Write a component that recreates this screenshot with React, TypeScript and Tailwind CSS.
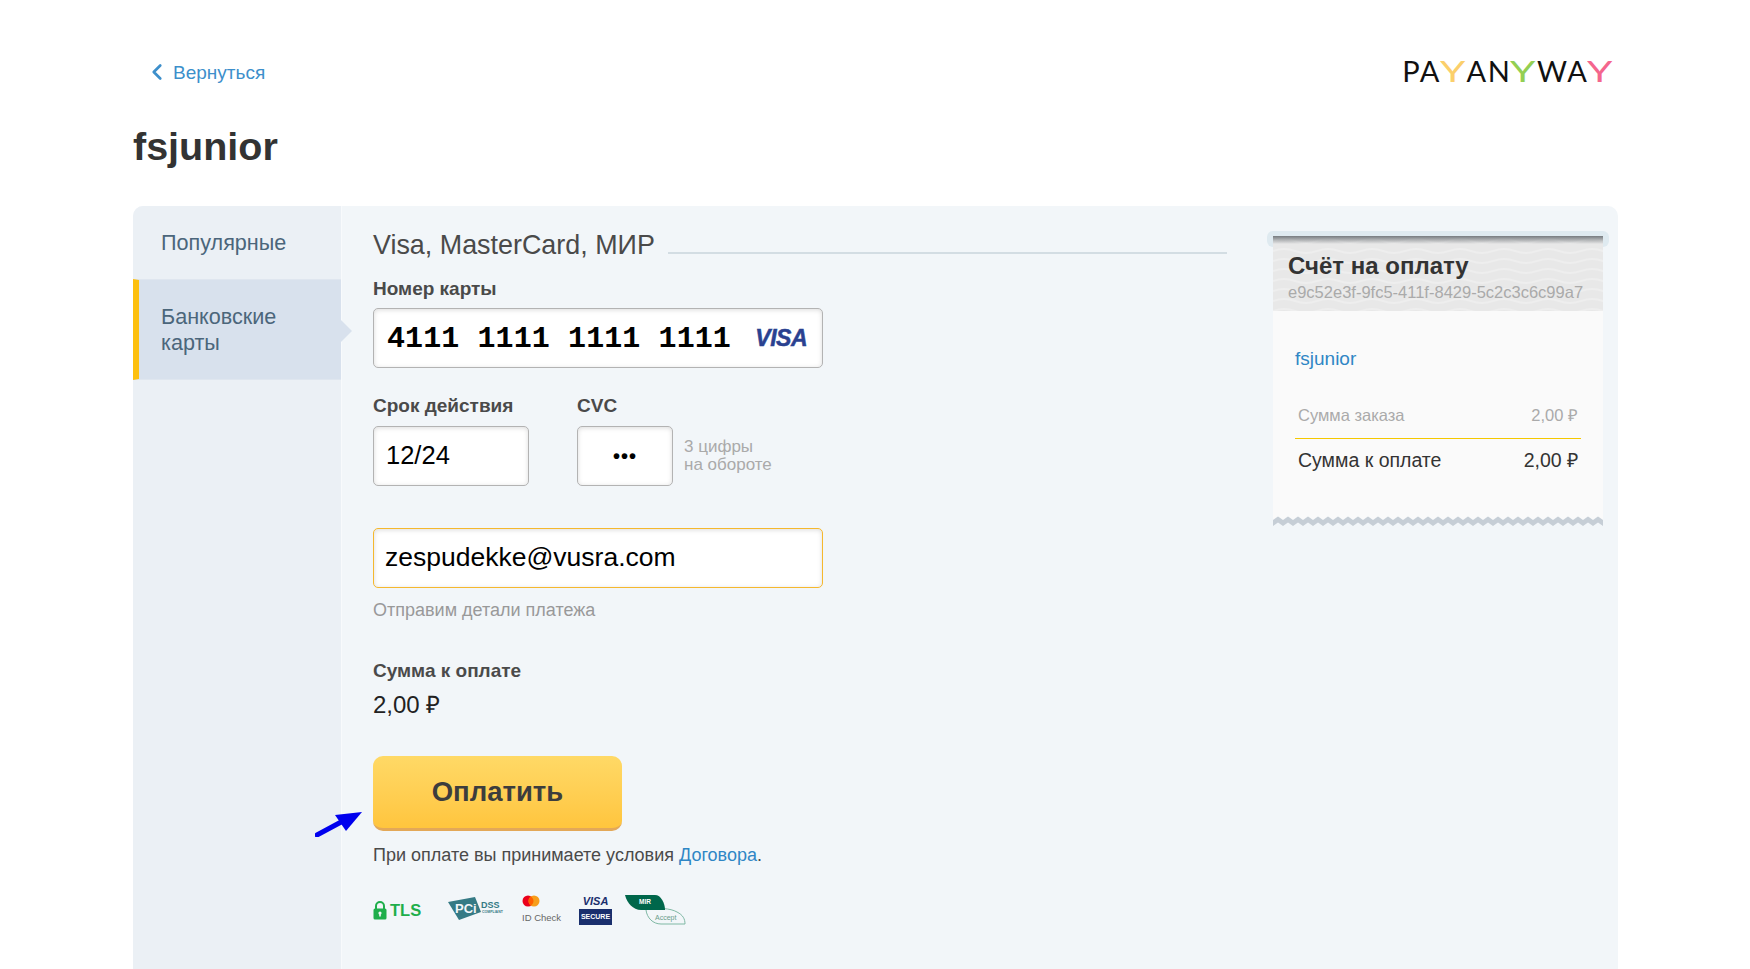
import { ChevronLeft } from "lucide-react";

const sans = "font-['Liberation_Sans',Arial,sans-serif]";

function Logo() {
  return (
    <div className="font-['Lato',sans-serif] font-normal text-[29px] leading-none text-[#111] tracking-[1.5px] flex">
      <span>PA</span>
      <span className="inline-block scale-x-[1.4] mx-[3px] text-[#fbcf6b]">Y</span>
      <span>AN</span>
      <span className="inline-block scale-x-[1.4] mx-[3px] text-[#93cf53]">Y</span>
      <span>WA</span>
      <span className="inline-block scale-x-[1.4] ml-[3px] text-[#f4668d]">Y</span>
    </div>
  );
}

function Field({ className, children }: { className: string; children: React.ReactNode }) {
  return (
    <div className={"h-[60px] bg-white rounded-[5px] border flex items-center shadow-[inset_0_1px_5px_rgba(0,0,0,0.14)] " + className}>
      {children}
    </div>
  );
}

function Label({ children }: { children: React.ReactNode }) {
  return <div className="text-[19px] leading-[22px] font-bold text-[#4a4a4a]">{children}</div>;
}

function WaveHeader() {
  return (
    <svg className="absolute inset-0 w-full h-full" aria-hidden="true">
      <defs>
        <pattern id="wave" width="44" height="10" patternUnits="userSpaceOnUse">
          <path d="M0 5 Q11 1 22 5 T44 5" fill="none" stroke="#ffffff" strokeOpacity="0.25" strokeWidth="2" />
        </pattern>
      </defs>
      <rect width="100%" height="100%" fill="url(#wave)" />
    </svg>
  );
}

function Zigzag() {
  return (
    <svg className="block w-full h-[12px] bg-[#f2f6f9]" aria-hidden="true">
      <defs>
        <pattern id="zig" width="10" height="12" patternUnits="userSpaceOnUse">
          <path d="M0 0 H10 V5 L5 1.5 L0 5 Z" fill="#fafafa" />
          <path d="M0 5 L5 1.5 L10 5 V11 L5 7.5 L0 11 Z" fill="#c6ced6" />
        </pattern>
      </defs>
      <rect width="100%" height="100%" fill="url(#zig)" />
    </svg>
  );
}

function Receipt() {
  return (
    <div className="w-[342px] mt-[25px] shrink-0">
      <div className="h-[16px] rounded-[6px] bg-[#dfeaf0]" />
      <div className="mx-[6px] -mt-[11px] relative">
        <div className="relative h-[75px] bg-[#e8e8e8] pl-[15px] overflow-hidden">
          <WaveHeader />
          <div className="absolute inset-x-0 top-0 h-[8px] bg-gradient-to-b from-[#777c80] to-transparent" />
          <div className="relative pt-[16px] text-[24px] leading-[28px] font-bold text-[#333] whitespace-nowrap">Счёт на оплату</div>
          <div className="relative mt-[2px] text-[16.5px] leading-[20px] text-[#aaa] whitespace-nowrap">e9c52e3f-9fc5-411f-8429-5c2c3c6c99a7</div>
        </div>
        <div className="bg-[#fafafa] h-[204px] px-[22px] pt-[37px]">
          <div className="text-[19px] leading-[22px] text-[#2f86c5]">fsjunior</div>
          <div className="mt-[34px] flex justify-between px-[3px] text-[16.5px] leading-[22px] text-[#aaa]">
            <span>Сумма заказа</span>
            <span>2,00 ₽</span>
          </div>
          <div className="mt-[12px] h-px bg-[#f5c800]" />
          <div className="mt-[9px] flex justify-between px-[3px] text-[19.5px] leading-[24px] text-[#333]">
            <span>Сумма к оплате</span>
            <span>2,00 ₽</span>
          </div>
        </div>
        <Zigzag />
      </div>
    </div>
  );
}

function Marks() {
  return (
    <div className="mt-[29px] flex items-start h-[48px]">
      <div className="w-[75px] mt-[6px] flex items-center gap-[3px] text-[#1fae4b] font-bold text-[16.5px] leading-none">
        <svg width="14" height="19" viewBox="0 0 14 19" aria-hidden="true">
          <path d="M3 8V5a4 4 0 0 1 8 0v3" fill="none" stroke="#1fae4b" strokeWidth="2" />
          <rect x="0.5" y="7.5" width="13" height="11" rx="1.5" fill="#1fae4b" />
          <circle cx="7" cy="12" r="1.6" fill="#f2f6f9" />
          <rect x="6.2" y="12" width="1.6" height="3.5" fill="#f2f6f9" />
        </svg>
        <span>TLS</span>
      </div>
      <div className="w-[74px] mt-[2px] relative h-[26px]">
        <svg width="34" height="24" viewBox="0 0 34 24" className="absolute left-0 top-0" aria-hidden="true">
          <path d="M0 5 L27 0 L33 15 L11 23 Z" fill="#357a85" />
        </svg>
        <span className="absolute left-[7px] top-[5px] text-[13px] leading-none font-bold text-[#f2f6f9]">PCi</span>
        <span className="absolute left-[33px] top-[4px] text-[9px] leading-none font-bold text-[#357a85]">DSS</span>
        <span className="absolute left-[34px] top-[14px] text-[3.5px] leading-none font-bold text-[#357a85]">COMPLIANT</span>
      </div>
      <div className="w-[57px]">
        <svg width="18" height="12" viewBox="0 0 18 12" aria-hidden="true" className="block">
          <circle cx="6" cy="6" r="5.5" fill="#eb001b" />
          <circle cx="12" cy="6" r="5.5" fill="#f79e1b" />
          <path d="M9 1.4a5.5 5.5 0 0 1 0 9.2a5.5 5.5 0 0 1 0-9.2z" fill="#ff5f00" />
        </svg>
        <div className="mt-[5px] text-[9.5px] leading-[11px] text-[#666] whitespace-nowrap">ID Check</div>
      </div>
      <div className="w-[33px] mr-[13px] flex flex-col items-center">
        <div className="italic font-bold text-[11px] leading-[13px] text-[#1a2f6d]">VISA</div>
        <div className="mt-[1px] w-[33px] h-[16px] bg-[#1a2f6d] text-white text-[7px] font-bold leading-[16px] text-center">SECURE</div>
      </div>
      <div className="relative w-[62px] h-[30px]">
        <svg width="62" height="30" viewBox="0 0 62 30" className="absolute inset-0" aria-hidden="true">
          <path d="M22 14 C34 13 45 13 52 17 C58 20 60 24 60 29 H36 C28 29 22 23 21 15 Z" fill="none" stroke="#7fb8a4" />
          <path d="M0 0 H30 C36 0 40 8 40 15 H16 C8 15 2 8 0 0 Z" fill="#00674b" />
        </svg>
        <span className="absolute left-[14px] top-[4px] text-[6.5px] leading-none font-bold text-white">MIR</span>
        <span className="absolute left-[30px] top-[19px] text-[7px] leading-none text-[#6b9d8c]">Accept</span>
      </div>
    </div>
  );
}

export default function App() {
  return (
    <div className={sans + " h-screen overflow-hidden bg-white pl-[133px] pr-[132px]"}>
      <div className="pt-[60px] h-[123px] flex justify-between items-start">
        <a className="flex items-center text-[19px] leading-[24px] text-[#3d8fcb] pl-[12px] mt-px">
          <ChevronLeft size={26} strokeWidth={2.5} className="-ml-[1px] mr-[3px] -mt-[2px]" />
          Вернуться
        </a>
        <div className="pr-[7px] -mt-[4px]">
          <Logo />
        </div>
      </div>
      <h1 className="text-[39.5px] leading-[46px] font-bold text-[#333]">fsjunior</h1>

      <div className="mt-[37px] flex rounded-t-[10px] overflow-hidden bg-[#f2f6f9] h-[763px]">
        <nav className="w-[209px] shrink-0 bg-[#ebf0f5] border-r border-[#f8fafc] text-[21.6px] leading-[26px] text-[#4b667b]">
          <div className="h-[73px] pl-[28px] pt-[24px]">Популярные</div>
          <div className="relative h-[101px] pl-[22px] pt-[24px] bg-[#d8e1ed] border-l-[6px] border-l-[#fdc00f] border-y border-y-[#dfe6ef]">
            Банковские
            <br />
            карты
            <div className="absolute -right-[11px] top-[40px] w-0 h-0 border-y-[11px] border-y-transparent border-l-[11px] border-l-[#d8e1ed]" />
          </div>
        </nav>

        <main className="flex-1 pl-[31px] pr-[9px] flex gap-[40px]">
          <div className="w-[854px]">
            <div className="pt-[24px] flex items-end">
              <div className="text-[26.9px] leading-[30px] text-[#4a4a4a] whitespace-nowrap">Visa, MasterCard, МИР</div>
              <div className="flex-1 ml-[13px] mb-[6px] h-0.5 bg-[#d3dde3]" />
            </div>
            <div className="mt-[18px]"><Label>Номер карты</Label></div>
            <Field className="mt-[8px] w-[450px] border-[#b3b3b3] pl-[13px] pr-[15px] justify-between">
              <span className="pt-[2px] font-['Liberation_Mono',monospace] font-bold text-[30px] tracking-[0.1px] text-black whitespace-nowrap">4111 1111 1111 1111</span>
              <span className="italic font-bold text-[23px] [-webkit-text-stroke:0.5px_#2a4190] text-[#2a4190] tracking-[-0.5px]">VISA</span>
            </Field>
            <div className="mt-[27px] flex">
              <div className="w-[204px]">
                <Label>Срок действия</Label>
                <Field className="mt-[9px] w-[156px] border-[#b3b3b3] pl-[12px] pb-[2px] text-[25.5px] text-black">12/24</Field>
              </div>
              <div>
                <Label>CVC</Label>
                <div className="mt-[9px] flex items-center">
                  <Field className="w-[96px] border-[#b3b3b3] justify-center text-[20px] tracking-[1px] font-bold text-black">•••</Field>
                  <div className="ml-[11px] text-[17px] leading-[18px] text-[#aaa]">3 цифры<br />на обороте</div>
                </div>
              </div>
            </div>
            <Field className="mt-[42px] w-[450px] border-[#f5b82e] pl-[11px] text-[26.5px] text-black">zespudekke@vusra.com</Field>
            <div className="mt-[11px] text-[18px] leading-[22px] text-[#999]">Отправим детали платежа</div>
            <div className="mt-[39px]"><Label>Сумма к оплате</Label></div>
            <div className="mt-[9px] text-[24px] leading-[28px] text-[#222]">2,00 ₽</div>
            <div className="mt-[37px] relative w-[249px]">
              <svg width="48" height="26" viewBox="0 0 48 26" className="absolute -left-[58px] top-[55px]" aria-hidden="true">
                <path d="M2 24 L28 10" stroke="#0000ee" strokeWidth="5" strokeLinecap="round" />
                <path d="M47 1 L20 4 L31 20 Z" fill="#0000ee" />
              </svg>
              <button className="w-[249px] h-[75px] rounded-[10px] bg-gradient-to-b from-[#ffd966] to-[#ffc53d] border-b-[3px] border-b-[#e3a858] text-[27.5px] font-bold text-[#3d3d3d]">Оплатить</button>
            </div>
            <div className="mt-[13px] text-[18px] leading-[22px] text-[#4a4a4a] whitespace-nowrap">
              При оплате вы принимаете условия <span className="text-[#2f86c5]">Договора</span>.
            </div>
            <Marks />
          </div>
          <Receipt />
        </main>
      </div>
    </div>
  );
}
